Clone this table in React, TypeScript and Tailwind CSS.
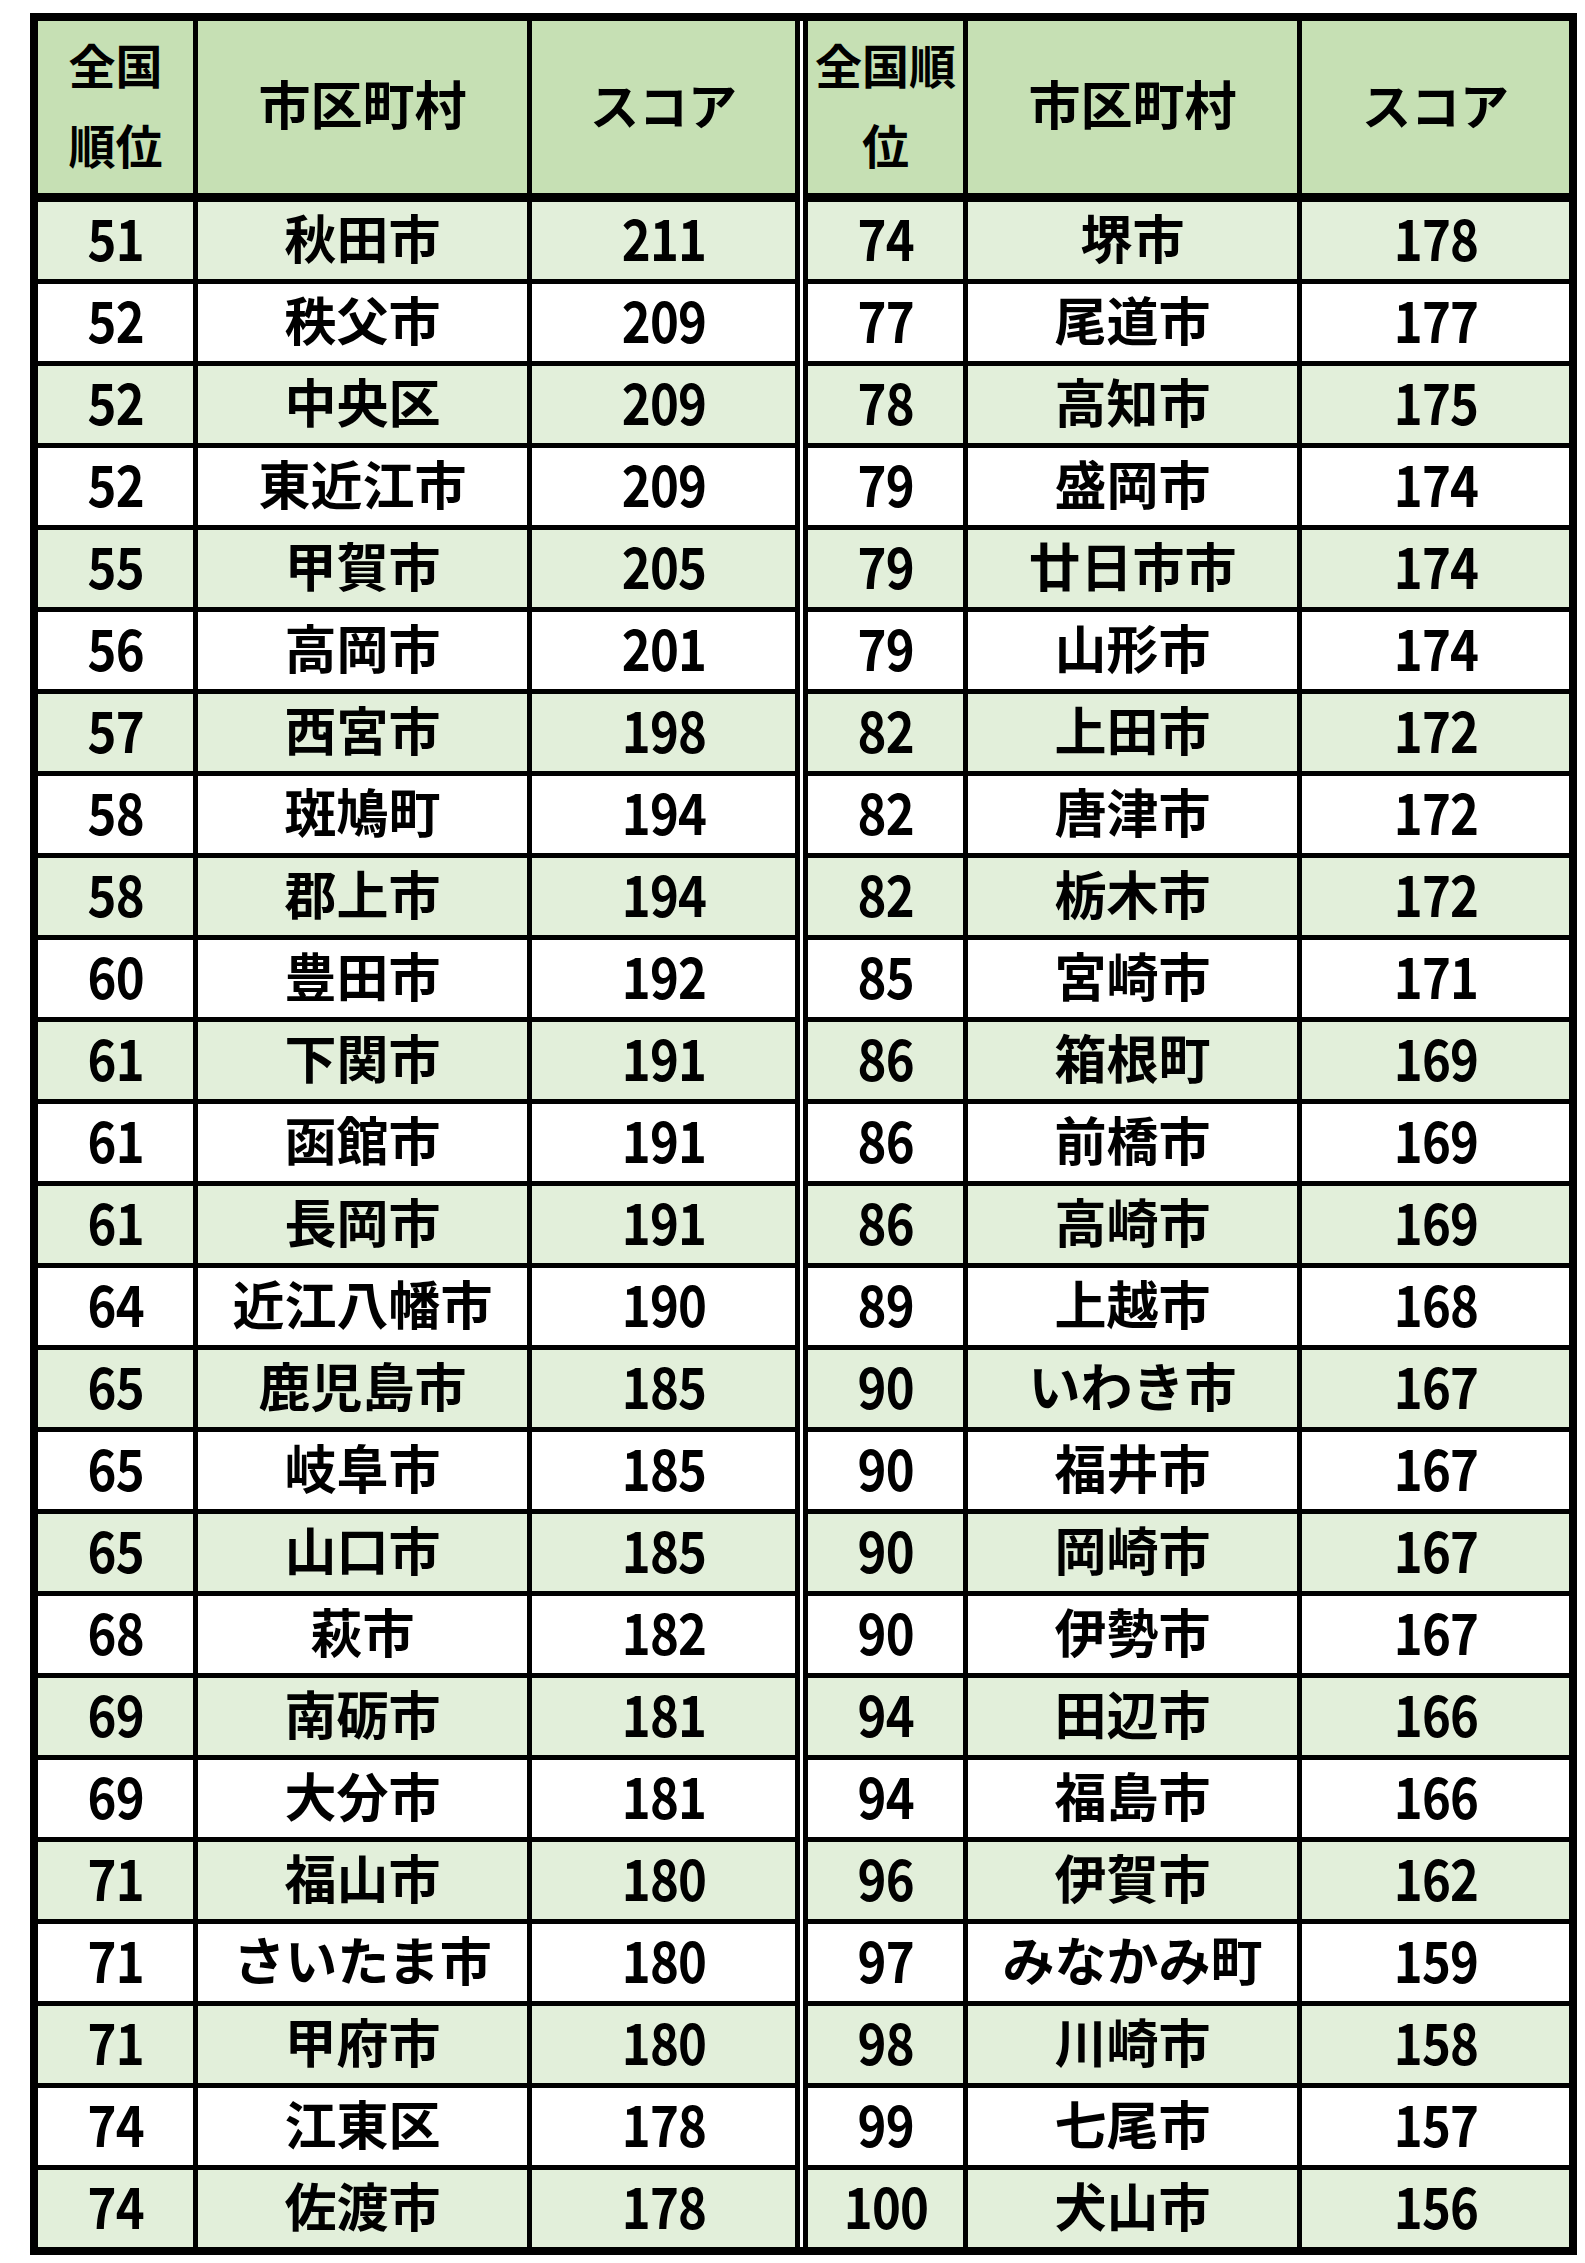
import React from "react";

type Row = [number, string, number];

const left: Row[] = [
  [51, "秋田市", 211],
  [52, "秩父市", 209],
  [52, "中央区", 209],
  [52, "東近江市", 209],
  [55, "甲賀市", 205],
  [56, "高岡市", 201],
  [57, "西宮市", 198],
  [58, "斑鳩町", 194],
  [58, "郡上市", 194],
  [60, "豊田市", 192],
  [61, "下関市", 191],
  [61, "函館市", 191],
  [61, "長岡市", 191],
  [64, "近江八幡市", 190],
  [65, "鹿児島市", 185],
  [65, "岐阜市", 185],
  [65, "山口市", 185],
  [68, "萩市", 182],
  [69, "南砺市", 181],
  [69, "大分市", 181],
  [71, "福山市", 180],
  [71, "さいたま市", 180],
  [71, "甲府市", 180],
  [74, "江東区", 178],
  [74, "佐渡市", 178],
];

const right: Row[] = [
  [74, "堺市", 178],
  [77, "尾道市", 177],
  [78, "高知市", 175],
  [79, "盛岡市", 174],
  [79, "廿日市市", 174],
  [79, "山形市", 174],
  [82, "上田市", 172],
  [82, "唐津市", 172],
  [82, "栃木市", 172],
  [85, "宮崎市", 171],
  [86, "箱根町", 169],
  [86, "前橋市", 169],
  [86, "高崎市", 169],
  [89, "上越市", 168],
  [90, "いわき市", 167],
  [90, "福井市", 167],
  [90, "岡崎市", 167],
  [90, "伊勢市", 167],
  [94, "田辺市", 166],
  [94, "福島市", 166],
  [96, "伊賀市", 162],
  [97, "みなかみ町", 159],
  [98, "川崎市", 158],
  [99, "七尾市", 157],
  [100, "犬山市", 156],
];

function Num({ v }: { v: number }) {
  return (
    <span className="inline-block scale-x-[0.86] text-[57px] leading-none tracking-[-1px]">
      {v}
    </span>
  );
}

function Half({
  rows,
  cols,
  rankHeader,
}: {
  rows: Row[];
  cols: string;
  rankHeader: React.ReactNode;
}) {
  return (
    <div className="flex flex-col bg-black">
      <div className={`grid ${cols} gap-x-[5px] h-[172px]`}>
        <div className="bg-[#c6e0b4] flex items-center justify-center text-center text-[47px] leading-[80px] pb-[6px]">
          {rankHeader}
        </div>
        <div className="bg-[#c6e0b4] flex items-center justify-center text-[52px] leading-none pb-[8px]">
          市区町村
        </div>
        <div className="bg-[#c6e0b4] flex items-center justify-center text-[49px] leading-none pb-[8px]">
          スコア
        </div>
      </div>
      <div className="h-[9px] bg-black" />
      <div className="flex flex-col gap-y-[5px]">
        {rows.map((r, i) => {
          const bg = i % 2 === 0 ? "bg-[#e2efda]" : "bg-white";
          return (
            <div key={i} className={`grid ${cols} gap-x-[5px] h-[77px]`}>
              <div className={`${bg} flex items-center justify-center pb-[8px]`}>
                <Num v={r[0]} />
              </div>
              <div className={`${bg} flex items-center justify-center text-[52px] leading-none whitespace-nowrap pb-[8px]`}>
                {r[1]}
              </div>
              <div className={`${bg} flex items-center justify-center pb-[8px]`}>
                <Num v={r[2]} />
              </div>
            </div>
          );
        })}
      </div>
    </div>
  );
}

export default function App() {
  return (
    <div className="min-h-[2263px] w-[1585px] bg-white pt-[13px] pl-[30px] font-['Noto_Sans_CJK_JP','Noto_Sans_CJK_SC',sans-serif] font-bold text-black">
      <div className="w-[1547px] border-[8px] border-black flex">
        <Half
          rows={left}
          cols="grid-cols-[155px_329px_263px]"
          rankHeader={
            <span>
              全国
              <br />
              順位
            </span>
          }
        />
        <div className="flex">
          <div className="w-[5px] bg-black" />
          <div className="w-[3px] bg-white" />
          <div className="w-[5px] bg-black" />
        </div>
        <Half
          rows={right}
          cols="grid-cols-[155px_329px_267px]"
          rankHeader={
            <span>
              全国順
              <br />
              位
            </span>
          }
        />
      </div>
    </div>
  );
}
